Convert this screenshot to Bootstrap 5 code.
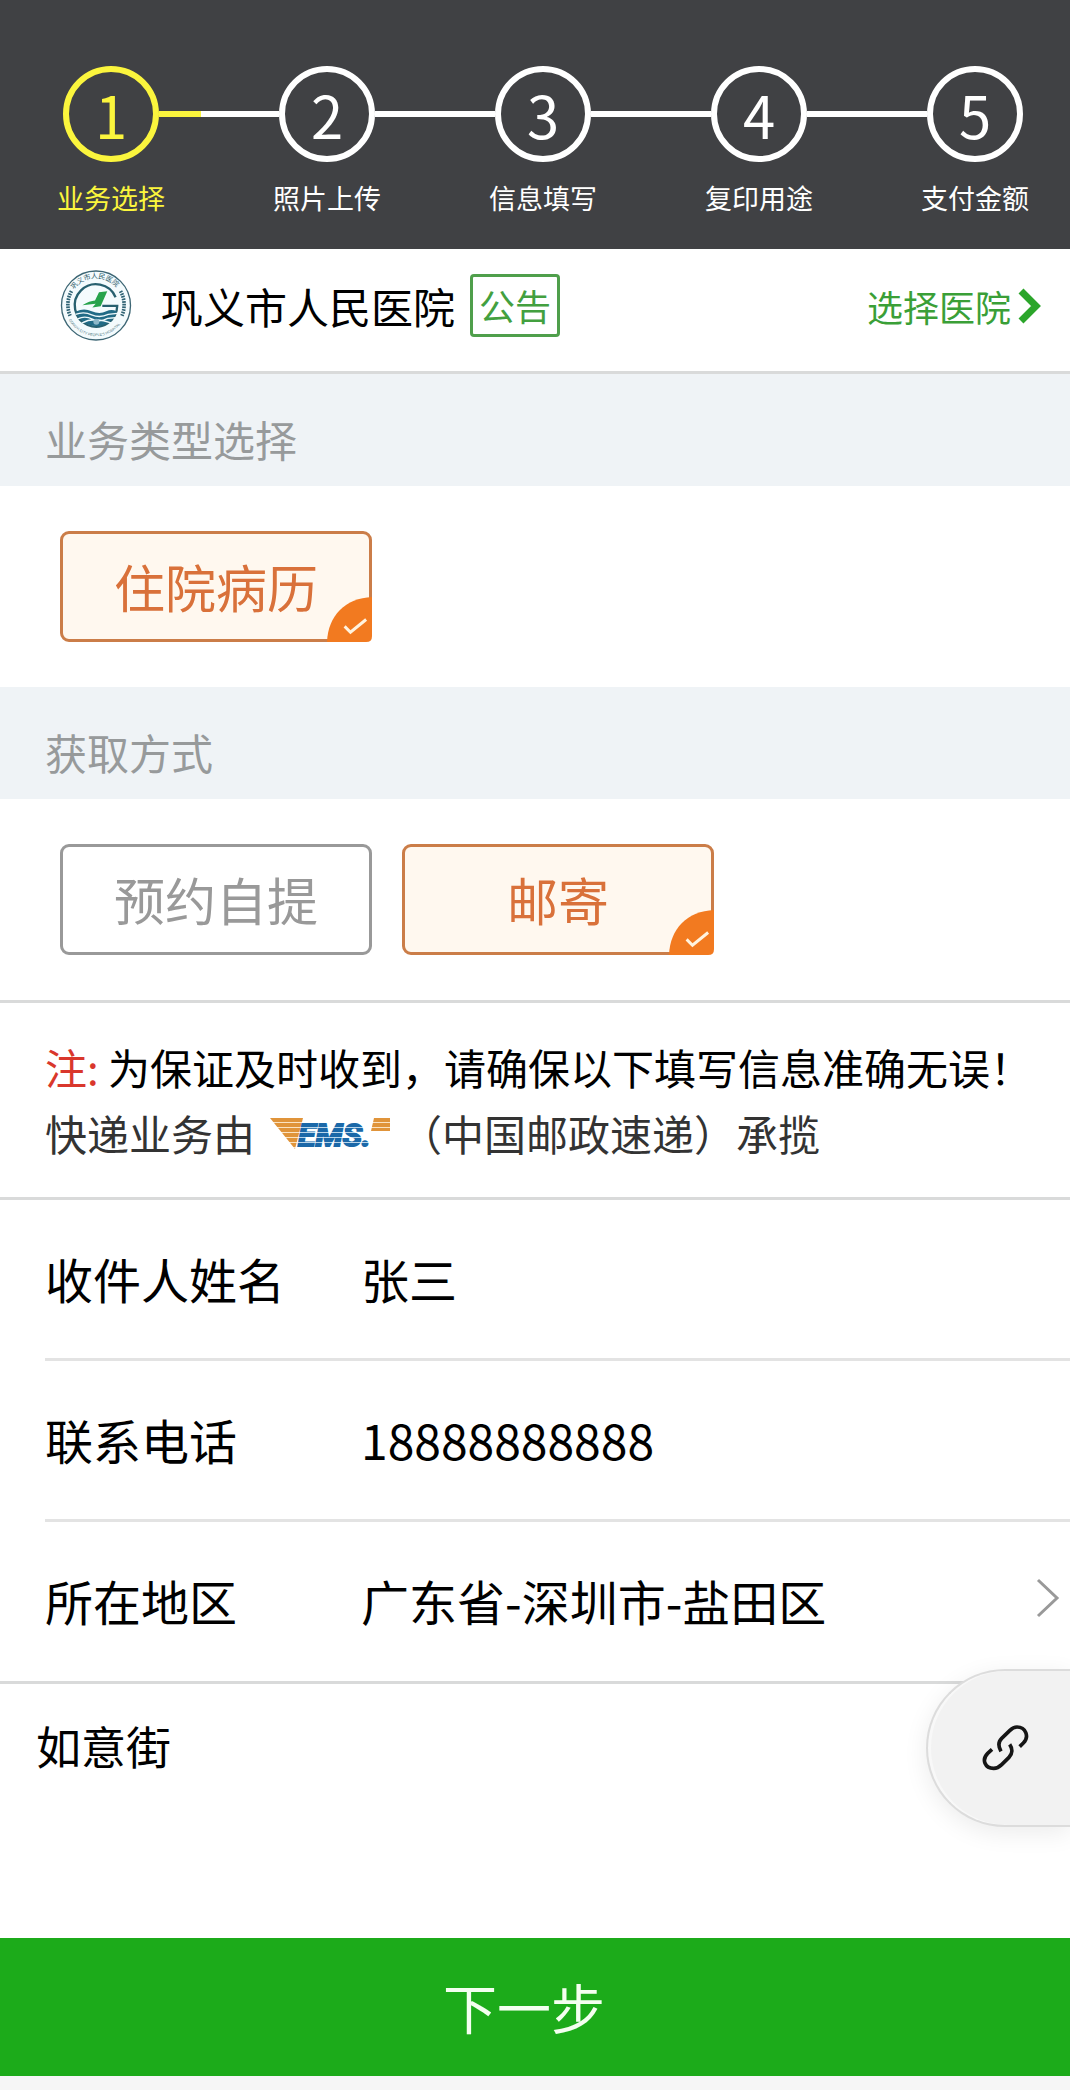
<!DOCTYPE html>
<html lang="zh-CN">
<head>
<meta charset="utf-8">
<meta name="viewport" content="width=device-width, initial-scale=1">
<title>业务选择</title>
<link href="https://cdn.jsdelivr.net/npm/bootstrap@5.3.0/dist/css/bootstrap.min.css" rel="stylesheet">
<style>
body{font-family:"Noto Sans CJK SC",sans-serif;color:#000;background:#f6f6f6;font-size:42px;line-height:66px}
.steps-bar{background:#404144;color:#fff;padding:66px 41px 33px 57px}
.step-item{width:108px}
.step-dot{width:96px;height:96px;border:6px solid currentColor;font-size:58px;line-height:84px}
.step-name{font-size:27px;line-height:36px;margin-top:18px}
.step-line{height:6px;margin:45px -6px 0;background:#fff}
.step-line-half{background:linear-gradient(90deg,#fbf53d 35%,#fff 35%)}
.step-now{color:#fbf53d}
.rule-b{border-bottom:3px solid #d9dada}
.hospital-bar{padding:21px 29px 30px 60px}
.hospital-logo{width:72px;height:71px;margin-right:29px}
.notice-btn{border:3px solid #4f9f4b;border-radius:4px;color:#43a03f;font-size:36px;line-height:57px;padding:0 6px;margin-left:15px;background:none}
.pick-link{color:#3a9f37;font-size:36px;gap:7px}
.band-title{background:#eff3f6;color:#979a9b;font-size:42px;line-height:66px;padding:32px 45px 14px;margin:0}
.option-set{padding:45px 60px;gap:30px}
.option-btn{width:312px;height:111px;border:3px solid #999;border-radius:9px;color:#999;font-size:51px;line-height:104px;cursor:pointer}
.option-btn svg{display:none;right:-3px;bottom:-3px}
.btn-check:checked+.option-btn{border-color:#cb7d48;color:#d9713a;background:#fff8ef}
.btn-check:checked+.option-btn svg{display:block}
.note-box{padding:31px 45px}
.note-red{color:#d9372c}
.note-sub{color:#333}
.ems-logo{width:120px;height:31px;margin:0 10px 0 15px}
.field-list{padding:0 0 1px 45px}
.field-row{border-bottom:3px solid #e3e3e3;padding:45px 10px 47px 0}
.field-list .field-row:last-child{border-bottom:0}
.field-name{width:316px;font-size:48px;line-height:66px}
.field-value{font-size:48px;line-height:66px;height:66px;border:0;padding:0;color:#000;background:none;min-width:0;outline:0}
.street-input{font-size:45px;line-height:66px;height:254px;border:0;padding:29px 36px;resize:none;color:#000;background:#fff;outline:0}
.share-pill{top:-15px;right:0;width:144px;height:158px;border:2px solid #dcdcdc;border-right:0;border-radius:80px 0 0 80px;background:#f2f2f2;box-shadow:0 6px 24px rgba(0,0,0,.08),inset 3px 0 0 #f8f8f8;padding:0 0 0 54px}
.next-btn{background:#1cab1a;color:#f4fff0;border:0;font-size:54px;line-height:78px;padding:30px 22px 30px 0}
</style>
<script src="https://cdn.jsdelivr.net/npm/bootstrap@5.3.0/dist/js/bootstrap.bundle.min.js"></script>
</head>
<body>
<header class="steps-bar d-flex text-center">
  <div class="step-item step-now flex-shrink-0"><div class="step-dot rounded-circle mx-auto">1</div><div class="step-name">业务选择</div></div>
  <div class="step-line step-line-half flex-fill"></div>
  <div class="step-item flex-shrink-0"><div class="step-dot rounded-circle mx-auto">2</div><div class="step-name">照片上传</div></div>
  <div class="step-line flex-fill"></div>
  <div class="step-item flex-shrink-0"><div class="step-dot rounded-circle mx-auto">3</div><div class="step-name">信息填写</div></div>
  <div class="step-line flex-fill"></div>
  <div class="step-item flex-shrink-0"><div class="step-dot rounded-circle mx-auto">4</div><div class="step-name">复印用途</div></div>
  <div class="step-line flex-fill"></div>
  <div class="step-item flex-shrink-0"><div class="step-dot rounded-circle mx-auto">5</div><div class="step-name">支付金额</div></div>
</header>

<main class="bg-white">
  <div class="hospital-bar rule-b d-flex align-items-center">
    <svg class="hospital-logo flex-shrink-0" viewBox="28 30 214 214" aria-hidden="true">
      <circle cx="135" cy="137" r="104" fill="#f4fbfd" stroke="#3d6674" stroke-width="4"/>
      <path d="M57 168A84 84 0 0 1 62 92M213 168A84 84 0 0 0 208 92" fill="none" stroke="#2f6273" stroke-width="11" stroke-dasharray="5 3"/>
      <path id="logoTop" d="M63 98A82 82 0 0 1 207 98" fill="none"/>
      <path id="logoBottom" d="M50 174A93 93 0 0 0 220 174" fill="none"/>
      <text font-size="21" fill="#2a5868"><textPath href="#logoTop" startOffset="10">巩义市人民医院</textPath></text>
      <text font-family="Liberation Sans" font-size="11" fill="#4c7480"><textPath href="#logoBottom" startOffset="7">GONGYI CITY PEOPLE'S HOSPITAL</textPath></text>
      <path d="M194 112A64 64 0 1 0 199 138H154" fill="none" stroke="#27606f" stroke-width="7"/>
      <path d="M75 155Q98 143 122 154T166 154Q182 147 197 154A64 64 0 0 1 75 155Z" fill="#216b86"/>
      <path d="M73 164Q98 154 122 165T172 164L199 161M80 177Q102 167 124 178T170 176L193 174M92 190Q112 179 135 180T180 189" fill="none" stroke="#eef9fb" stroke-width="4"/>
      <path d="M144 97L169 94L149 139L124 143L134 132L94 136Q116 123 132 122Z" fill="#27a34c"/>
      <circle cx="136" cy="186" r="9" fill="#8cb7c8"/>
    </svg>
    <span>巩义市人民医院</span>
    <button type="button" class="notice-btn">公告</button>
    <a href="#" class="pick-link ms-auto d-flex align-items-center text-decoration-none">选择医院<svg width="23" height="36" viewBox="0 0 23 36" aria-hidden="true"><path d="M3 3L18 18L3 33" fill="none" stroke="#2ba52a" stroke-width="7"/></svg></a>
  </div>

  <h2 class="band-title fw-normal">业务类型选择</h2>
  <div class="option-set d-flex">
    <input class="btn-check" type="radio" name="kind" id="kind1" checked>
    <label class="option-btn position-relative text-center" for="kind1">住院病历<svg class="position-absolute" width="45" height="45" viewBox="0 0 46 46" aria-hidden="true"><path d="M0 46C1 19 19 1 46 0V40Q46 46 40 46Z" fill="#f27a20"/><path d="M18 30L24 36L40 23" fill="none" stroke="#fff3df" stroke-width="3"/></svg></label>
  </div>

  <h2 class="band-title fw-normal">获取方式</h2>
  <div class="option-set rule-b d-flex">
    <input class="btn-check" type="radio" name="way" id="way1">
    <label class="option-btn position-relative text-center" for="way1">预约自提</label>
    <input class="btn-check" type="radio" name="way" id="way2" checked>
    <label class="option-btn position-relative text-center" for="way2">邮寄<svg class="position-absolute" width="45" height="45" viewBox="0 0 46 46" aria-hidden="true"><path d="M0 46C1 19 19 1 46 0V40Q46 46 40 46Z" fill="#f27a20"/><path d="M18 30L24 36L40 23" fill="none" stroke="#fff3df" stroke-width="3"/></svg></label>
  </div>

  <div class="note-box rule-b">
    <div class="text-nowrap"><span class="note-red">注:</span> 为保证及时收到，请确保以下填写信息准确无误！</div>
    <div class="note-sub d-flex align-items-center"><span>快递业务由</span><svg class="ems-logo flex-shrink-0 overflow-visible" viewBox="0 0 120 31" role="img" aria-label="EMS">
      <defs><pattern id="blueStripe" width="8" height="5" patternUnits="userSpaceOnUse"><rect width="8" height="5" fill="#1b68a8"/><rect y="4" width="8" height="1" fill="#b9d5ea"/></pattern>
      <pattern id="goldStripe" width="8" height="5" patternUnits="userSpaceOnUse"><rect width="8" height="5" fill="#e0943a"/><rect y="4" width="8" height="1" fill="#fbe3c2"/></pattern></defs>
      <path d="M0 0H33L25 31Z" fill="url(#goldStripe)"/><path d="M104 0H120V13H101Z" fill="url(#goldStripe)"/>
      <text x="28" y="28" font-family="Liberation Sans Narrow, Roboto, sans-serif" font-weight="700" font-style="italic" font-size="32" fill="url(#blueStripe)" stroke="url(#blueStripe)" stroke-width="2">EMS.</text>
    </svg><span>（中国邮政速递）承揽</span></div>
  </div>

  <form>
    <div class="field-list rule-b">
      <div class="field-row d-flex align-items-center"><label class="field-name flex-shrink-0" for="fName">收件人姓名</label><input class="field-value flex-fill" id="fName" type="text" value="张三"></div>
      <div class="field-row d-flex align-items-center"><label class="field-name flex-shrink-0" for="fTel">联系电话</label><input class="field-value flex-fill" id="fTel" type="tel" value="18888888888"></div>
      <div class="field-row d-flex align-items-center"><label class="field-name flex-shrink-0" for="fArea">所在地区</label><input class="field-value flex-fill" id="fArea" type="text" value="广东省-深圳市-盐田区" readonly><svg width="24" height="40" viewBox="0 0 24 40" class="flex-shrink-0 mb-1" aria-hidden="true"><path d="M2 2L21 20L2 38" fill="none" stroke="#999" stroke-width="3"/></svg></div>
    </div>
    <div class="position-relative">
      <textarea class="street-input d-block w-100" aria-label="详细地址">如意街</textarea>
      <button type="button" class="share-pill position-absolute d-flex align-items-center" aria-label="链接">
        <svg width="48" height="48" viewBox="397 560 144 144" aria-hidden="true"><g fill="none" stroke="#161616" stroke-width="11"><path d="M510 628L521 617C540 598 528 569 502 569C492 569 486 574 480 580L456 603C446 613 446 628 454 642"/><path d="M427 636L414 648C395 667 406 693 432 693C442 693 449 689 456 682L478 660C489 649 489 634 480 621"/></g></svg>
      </button>
    </div>
    <button type="button" class="next-btn d-block w-100">下一步</button>
  </form>
</main>
</body>
</html>
